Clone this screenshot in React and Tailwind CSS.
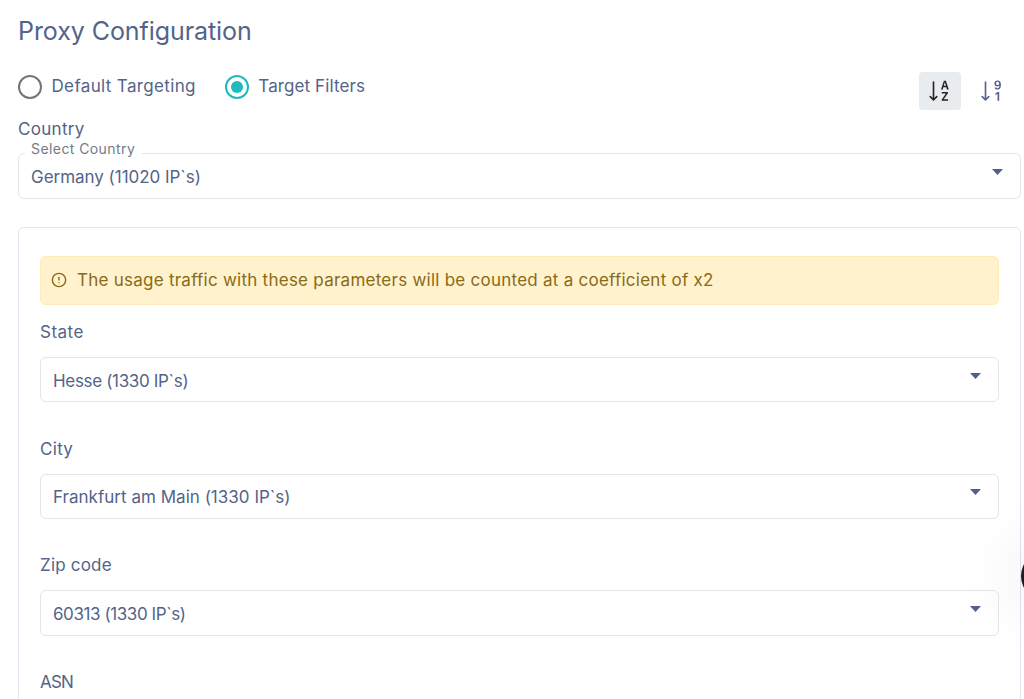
import { useState } from 'react';
import { BsSortAlphaDown, BsSortNumericDownAlt } from 'react-icons/bs';
import { CircleAlert } from 'lucide-react';

const FIELDS = [
  { label: 'State',    value: 'Hesse (1330 IP`s)',             labelCls: 'tracking-[0.5px]', valueCls: 'tracking-[-0.33px]' },
  { label: 'City',     value: 'Frankfurt am Main (1330 IP`s)', labelCls: 'tracking-[0.3px]', valueCls: 'tracking-[0.02px]' },
  { label: 'Zip code', value: '60313 (1330 IP`s)',             labelCls: 'tracking-[0.2px]', valueCls: 'tracking-[-0.42px]' },
];

function Radio({ checked, label, textCls, onClick }) {
  return (
    <button onClick={onClick} className="flex items-center gap-[9.5px]">
      <span className={`w-6 h-6 rounded-full border-[2.5px] flex items-center justify-center ${checked ? 'border-[#1dbac0]' : 'border-[#757575]'}`}>
        {checked && <span className="w-3 h-3 rounded-full bg-[#1dbac0]" />}
      </span>
      <span className={`text-[17px] leading-6 pb-px whitespace-nowrap ${textCls}`}>{label}</span>
    </button>
  );
}

function Select({ value, valueCls, floating }) {
  return (
    <div className={`relative rounded-md border border-[#e4e5e8] flex items-center justify-between pl-3 pr-[17px] ${floating ? 'h-[46px]' : 'h-[45.4px]'}`}>
      {floating && (
        <span className="absolute left-[6px] -top-[15px] h-5 w-[117px] pl-[6px] bg-white text-[14px] leading-5 text-[#747b88] tracking-[0.42px] whitespace-nowrap">
          {floating}
        </span>
      )}
      <span className={`text-[17px] leading-6 pt-[2px] whitespace-nowrap ${valueCls}`}>{value}</span>
      <svg width="11" height="6" viewBox="0 0 11 6" className="mb-[8px]" fill="#4f6389">
        <path d="M0 0h11L5.5 6z" />
      </svg>
    </div>
  );
}

export default function App() {
  const [mode, setMode] = useState('filters');

  return (
    <div className="relative h-[699px] overflow-hidden bg-white pl-[18px] pr-[3px] pt-[14px] font-['Inter',sans-serif] text-[#53648a]">
      <h1 className="text-[25px] leading-[34px] tracking-[-0.07px] whitespace-nowrap">Proxy Configuration</h1>

      <div className="flex justify-between h-[38px] mt-6 pr-[8.5px]">
        <div className="flex items-center gap-[29px] h-[29px]">
          <Radio label="Default Targeting" textCls="tracking-[0.35px]" checked={mode === 'default'} onClick={() => setMode('default')} />
          <Radio label="Target Filters" textCls="tracking-[0.1px]" checked={mode === 'filters'} onClick={() => setMode('filters')} />
        </div>
        <div className="flex gap-[10px]">
          <button className="w-[42px] h-[38px] rounded bg-[#e9ecef] text-[#212529] flex items-center justify-center pl-px pb-px">
            <BsSortAlphaDown size={26} />
          </button>
          <button className="w-[42px] h-[38px] flex items-center justify-center pl-px pb-px">
            <BsSortNumericDownAlt size={26} />
          </button>
        </div>
      </div>

      <p className="text-[17px] leading-6 mt-[7px] mb-3 tracking-[0.3px]">Country</p>
      <Select value="Germany (11020 IP`s)" valueCls="tracking-[-0.03px]" floating="Select Country" />

      <div className="mt-7 h-[500px] rounded-md border border-[#e3e6f0] pt-7 px-[21px]">
        <div className="h-[49px] rounded-md border border-[#ffebb5] bg-[#fff2cd] text-[#8a6a17] flex items-center gap-[10px] pl-[10px]">
          <CircleAlert size={16} strokeWidth={2.1} className="mb-px" />
          <span className="text-[17px] leading-6 pb-[2px] whitespace-nowrap tracking-[0.25px]">
            The usage traffic with these parameters will be counted at a coefficient of x2
          </span>
        </div>
        <div className="pt-[15px]">
          {FIELDS.map((f) => (
            <div key={f.label} className="mb-[34.2px]">
              <p className={`text-[17px] leading-6 mb-[13px] ${f.labelCls}`}>{f.label}</p>
              <Select value={f.value} valueCls={f.valueCls} />
            </div>
          ))}
          <p className="text-[17px] leading-6 tracking-[-0.8px]">ASN</p>
        </div>
      </div>

      {/* chat launcher, mostly past the right edge */}
      <div className="absolute left-[1021px] top-[551px] w-[50px] h-[50px] rounded-full bg-[#1b1d22] shadow-[0_0_70px_rgba(0,0,0,0.13)]" />
    </div>
  );
}
